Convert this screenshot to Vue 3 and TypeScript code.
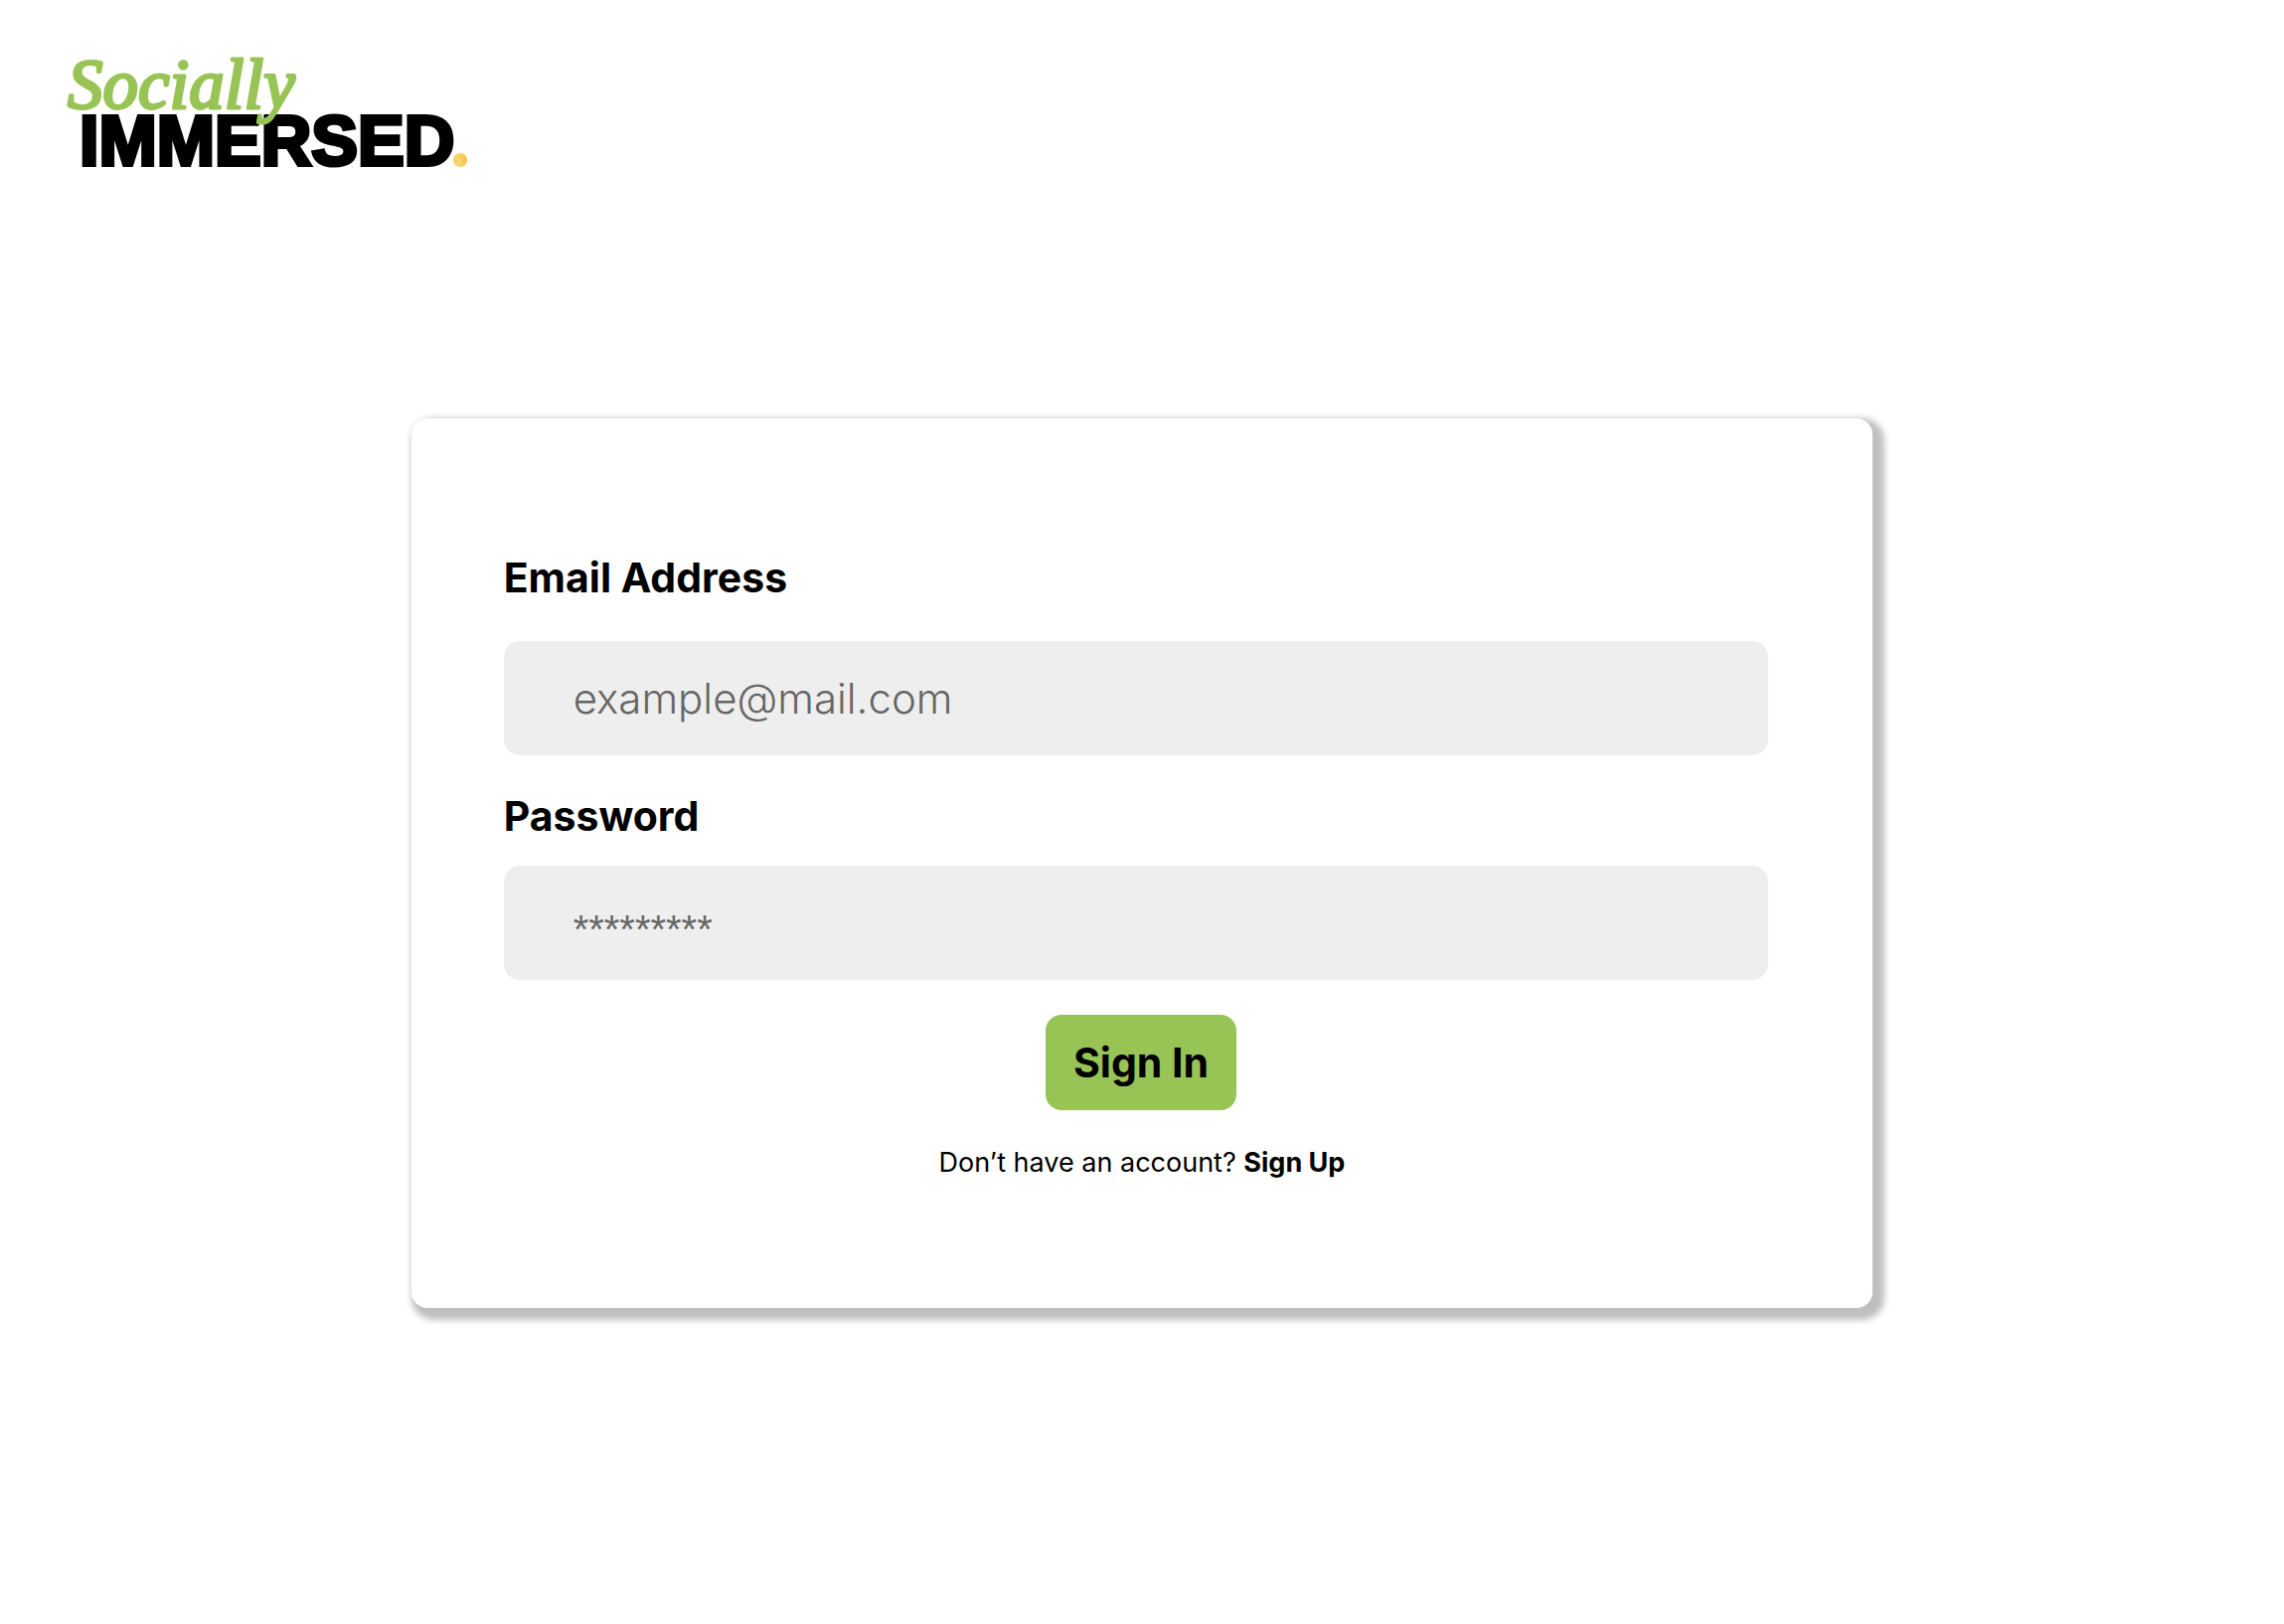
<script setup lang="ts">
import { ref } from 'vue'

const email = ref('')
const password = ref('')
</script>

<template>
  <div class="page">
    <header class="header">
      <svg class="logo" viewBox="0 0 412 132" role="img" aria-label="Socially Immersed">
        <defs>
          <linearGradient id="dot" x1="0" x2="1" y1="0" y2="0">
            <stop offset="0" stop-color="#f8cf58" />
            <stop offset="0.4" stop-color="#fad672" />
            <stop offset="1" stop-color="#f6c13a" />
          </linearGradient>
        </defs>
        <text class="logo-name" x="16" y="118">IMMERSED</text>
        <text class="logo-script" x="4" y="61">Socially</text>
        <circle cx="399" cy="113" r="7" fill="url(#dot)" />
      </svg>
    </header>

    <main class="card">
      <form class="form" @submit.prevent>
        <label class="label" for="email">Email Address</label>
        <input id="email" v-model="email" class="field email" type="email" placeholder="example@mail.com" />
        <label class="label" for="password">Password</label>
        <input id="password" v-model="password" class="field password" type="password" placeholder="*********" />
        <button class="submit" type="submit">Sign In</button>
      </form>
      <p class="signup">Don’t have an account? <a href="#">Sign Up</a></p>
    </main>
  </div>
</template>

<style>
body {
  background: #fff;
}
</style>

<style scoped>
.page {
  box-sizing: border-box;
  min-height: 100vh;
  padding-bottom: 64px;
  font-family: Inter, 'Open Sans', sans-serif;
  color: #000;
}

.header {
  padding: 48px 64px 0;
}

.logo {
  display: block;
  width: 412px;
  height: 132px;
  overflow: visible;
}

.logo-name {
  font: bold 70px 'Liberation Sans', sans-serif;
  fill: #000;
  stroke: #000;
  stroke-width: 4px;
}

.logo-script {
  font: italic 71px 'Liberation Serif', cursive;
  fill: #98c455;
  stroke: #98c455;
  stroke-width: 3px;
  stroke-linejoin: round;
}

.card {
  box-sizing: border-box;
  width: 64%;
  margin: 241px auto 0;
  padding: 136px 0 130px;
  border-radius: 16px;
  background: #fff;
  box-shadow: 6px 6px 6px 6px rgba(0, 0, 0, 0.25);
}

.form {
  display: flex;
  flex-direction: column;
  padding: 0 105px 0 93px;
}

.label {
  font-size: 41px;
  line-height: 48px;
  font-weight: 700;
}

.field {
  box-sizing: border-box;
  width: 100%;
  height: 115px;
  padding: 0 70px;
  border: 0;
  border-radius: 16px;
  background: #eee;
  font-family: inherit;
  font-size: 42px;
  color: #666;
}

.field::placeholder {
  color: #666;
  opacity: 1;
}

.email {
  margin: 40px 0 37px;
  font-weight: 300;
}

.password {
  margin: 26px 0 35px;
  padding-top: 14px;
  font-family: 'Liberation Sans', sans-serif;
  font-size: 40px;
}

.submit {
  align-self: center;
  height: 96px;
  margin-left: 10px;
  padding: 0 28px;
  border: 0;
  border-radius: 16px;
  background: #98c455;
  font-family: inherit;
  font-size: 41px;
  font-weight: 700;
  color: #000;
}

.signup {
  margin: 37px 0 0;
  font-size: 27px;
  line-height: 32px;
  text-align: center;
}

.signup a {
  font-weight: 700;
  color: #000;
  text-decoration: none;
}
</style>
